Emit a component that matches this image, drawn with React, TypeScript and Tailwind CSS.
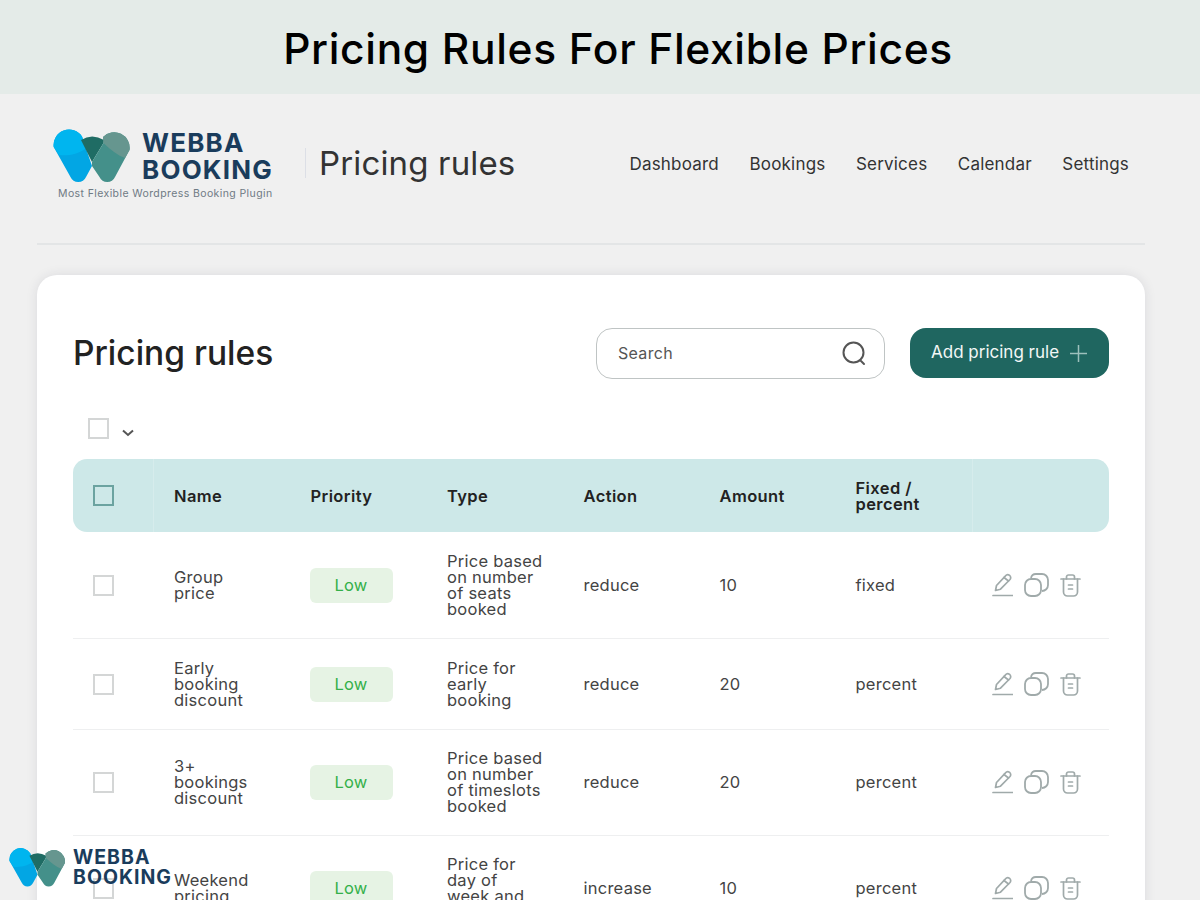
import React from "react";

const font = { fontFamily: "Inter, 'Open Sans', sans-serif" };

function Logo({ width = 78 }: { width?: number }) {
  return (
    <svg width={width} height={(width * 55) / 78} viewBox="0 0 78 55" className="shrink-0">
      <path d="M0.7 19 A15.5 15.5 0 0 1 29 8.5 L39 38 L33 49 A8.5 8.5 0 0 1 17.5 49 Z" fill="#02a6e4" />
      <path d="M0.7 19 A15.5 15.5 0 0 1 29 8.5 L33.5 20 C24 27 14 28 6 27 Z" fill="#00b5ef" />
      <path d="M28 12 Q39 5 51 12 L50.5 15 L39 34 Z" fill="#1f6c64" />
      <path d="M50.5 15 L39 34 L39 38 L46.5 49 A8.5 8.5 0 0 0 62 49 L76.5 22 A15.5 15.5 0 0 0 50 9 Z" fill="#44908a" />
      <path d="M50 9 A15.5 15.5 0 0 1 76.5 22 L72 30 C64 27 58 22 50.5 15 Z" fill="#66968f" />
    </svg>
  );
}

function Check({ teal = false }: { teal?: boolean }) {
  return (
    <span
      className={
        teal
          ? "block w-[21px] h-[21px] border-2 border-[#6ba3a0]"
          : "block w-[21px] h-[21px] border-2 border-[#d4d6d6]"
      }
    />
  );
}

function RowIcons() {
  return (
    <div className="flex items-center gap-[11px] text-[#a0aaaa]">
      <svg width="21" height="24" viewBox="0 0 21 24" fill="none" stroke="currentColor" strokeWidth="1.7" strokeLinejoin="round" strokeLinecap="round">
        <path d="M3.5 17.5 L4.5 12.5 L13.5 2.8 A2.4 2.4 0 0 1 18 6.5 L8.5 16.2 Z" />
        <path d="M12 4.5 L16.5 8" />
        <path d="M1 22.5 H20.5" />
      </svg>
      <svg width="25" height="24" viewBox="0 0 25 24" fill="none" stroke="currentColor" strokeWidth="1.8">
        <rect x="1" y="6" width="16" height="17" rx="6" />
        <path d="M7 5 A5 5 0 0 1 12 1 H18 A6 6 0 0 1 24 7 V12 A6 6 0 0 1 18 18" />
      </svg>
      <svg width="21" height="23" viewBox="0 0 21 23" fill="none" stroke="currentColor" strokeWidth="1.7" strokeLinecap="round">
        <path d="M1 5 H20" />
        <path d="M6.5 5 V3 A2 2 0 0 1 8.5 1 H12.5 A2 2 0 0 1 14.5 3 V5" />
        <path d="M3.5 5 V18 A4 4 0 0 0 7.5 22 H13.5 A4 4 0 0 0 17.5 18 V5" />
        <path d="M8.5 11 H12.5 M8.5 15 H12.5" />
      </svg>
    </div>
  );
}

const rows = [
  { name: ["Group", "price"], type: ["Price based", "on number", "of seats", "booked"], action: "reduce", amount: "10", fixed: "fixed", pad: "pt-[21px] pb-[21px]" },
  { name: ["Early", "booking", "discount"], type: ["Price for", "early", "booking"], action: "reduce", amount: "20", fixed: "percent", pad: "pt-[21px] pb-[21px]" },
  { name: ["3+", "bookings", "discount"], type: ["Price based", "on number", "of timeslots", "booked"], action: "reduce", amount: "20", fixed: "percent", pad: "pt-[20px] pb-[21px]" },
  { name: ["Weekend", "pricing"], type: ["Price for", "day of", "week and", "time"], action: "increase", amount: "10", fixed: "percent", pad: "pt-[20px] pb-[21px]" },
];

const cols = "grid grid-cols-[81px_136.5px_136.5px_136.5px_136px_136px_136px_1fr]";

export default function App() {
  return (
    <div className="relative w-[1200px] h-[900px] overflow-hidden bg-[#f0f0f0] text-[#222]" style={font}>
      <div className="h-[94px] bg-[#e4ebe8] flex items-center justify-center pt-[4px]">
        <h1 className="text-[42.5px] font-medium text-black leading-none tracking-[0.65px] ml-[36px]">Pricing Rules For Flexible Prices</h1>
      </div>

      <header className="ml-[37px] mr-[55px] h-[151px] border-b-2 border-[#e3e5e6] flex items-center">
        <div className="ml-[16px] mt-[-10px] w-[221px] shrink-0">
          <div className="flex items-center gap-[11px]">
            <Logo width={78} />
            <div className="text-[#1a3c5c] font-bold text-[26px] leading-[27px] tracking-[1.2px] pt-[2px]">
              <div>WEBBA</div>
              <div>BOOKING</div>
            </div>
          </div>
          <div className="ml-[5px] mt-[5px] text-[10.5px] leading-[12px] tracking-[0.4px] text-[#6f7a84] whitespace-nowrap">
            Most Flexible Wordpress Booking Plugin
          </div>
        </div>
        <div className="ml-[31px] mt-[-11px] w-[1px] h-[30px] bg-[#dcdfe6]" />
        <div className="ml-[13px] mt-[-11px] text-[33px] leading-none tracking-[0.15px] text-[#333]">Pricing rules</div>
        <nav className="ml-auto mr-[16px] mt-[-7px] flex gap-[30.5px] text-[17px] tracking-[0.2px] text-[#333]">
          <span>Dashboard</span>
          <span>Bookings</span>
          <span>Services</span>
          <span>Calendar</span>
          <span>Settings</span>
        </nav>
      </header>

      <main className="ml-[37px] mr-[55px] mt-[30px] h-[700px] bg-white rounded-t-[20px] shadow-[0_0_12px_rgba(40,40,70,0.10)] px-[36px]">
        <div className="flex items-center pt-[52px]">
          <h2 className="text-[33.5px] leading-[48px] font-medium text-[#222] my-[2px]">Pricing rules</h2>
          <div className="ml-auto w-[289px] h-[51px] rounded-[16px] border border-[#bfc4c4] flex items-center pl-[21px] pr-[17px] justify-between">
            <span className="text-[16px] tracking-[0.3px] text-[#555]">Search</span>
            <svg width="26" height="26" viewBox="0 0 26 26" fill="none" stroke="#555" strokeWidth="2" strokeLinecap="round">
              <circle cx="12.5" cy="12.5" r="10" />
              <path d="M20 21 L23 24" />
            </svg>
          </div>
          <button className="ml-[25px] w-[199px] h-[50px] rounded-[16px] bg-[#1f6660] text-[#f2f7f6] text-[17px] flex items-center pl-[21px] gap-[11px]">
            <span>Add pricing rule</span>
            <svg width="17" height="17" viewBox="0 0 17 17" stroke="#9dc0bc" strokeWidth="1.5">
              <path d="M8.5 0 V17 M0 8.5 H17" />
            </svg>
          </button>
        </div>

        <div className="flex items-center h-[80px] pt-[19px] pl-[15px]">
          <Check />
          <svg width="14" height="8" viewBox="0 0 14 8" fill="none" stroke="#555" strokeWidth="2" className="ml-[12px] mt-[8px]">
            <path d="M2 1.5 L7 6 L12 1.5" />
          </svg>
        </div>

        <div className={`${cols} h-[73px] bg-[#cde8e8] rounded-[14px] font-semibold text-[16.5px] tracking-[0.4px] leading-[16px] text-[#222]`}>
          <div className="border-r border-[#d6ecec] flex items-center pl-[20px]">
            <Check teal />
          </div>
          {["Name", "Priority", "Type", "Action", "Amount"].map((h) => (
            <div key={h} className="flex items-center pl-[20px]">{h}</div>
          ))}
          <div className="flex items-center pl-[20px]">Fixed /<br />percent</div>
          <div className="border-l border-[#d6ecec]" />
        </div>

        {rows.map((r, i) => (
          <div key={i} className={`${cols} ${r.pad} border-b border-[#eeeff0] text-[16.5px] tracking-[0.25px] leading-[16px] text-[#444] items-center`}>
            <div className="pl-[20px]"><Check /></div>
            <div className="pl-[20px]">{r.name.map((n) => <div key={n}>{n}</div>)}</div>
            <div className="pl-[19px]">
              <span className="flex items-center justify-center w-[83px] h-[35px] rounded-[6px] bg-[#e6f3e4] text-[#34b04a]">Low</span>
            </div>
            <div className="pl-[20px]">{r.type.map((n) => <div key={n}>{n}</div>)}</div>
            <div className="pl-[20px]">{r.action}</div>
            <div className="pl-[20px]">{r.amount}</div>
            <div className="pl-[20px]">{r.fixed}</div>
            <div className="pl-[20px]"><RowIcons /></div>
          </div>
        ))}
      </main>

      <div className="absolute left-[9px] top-[847px] flex items-center gap-[7px]">
        <Logo width={57} />
        <div className="text-[#1a3c5c] font-bold text-[19.5px] leading-[20px] tracking-[1px]">
          <div>WEBBA</div>
          <div>BOOKING</div>
        </div>
      </div>
    </div>
  );
}
